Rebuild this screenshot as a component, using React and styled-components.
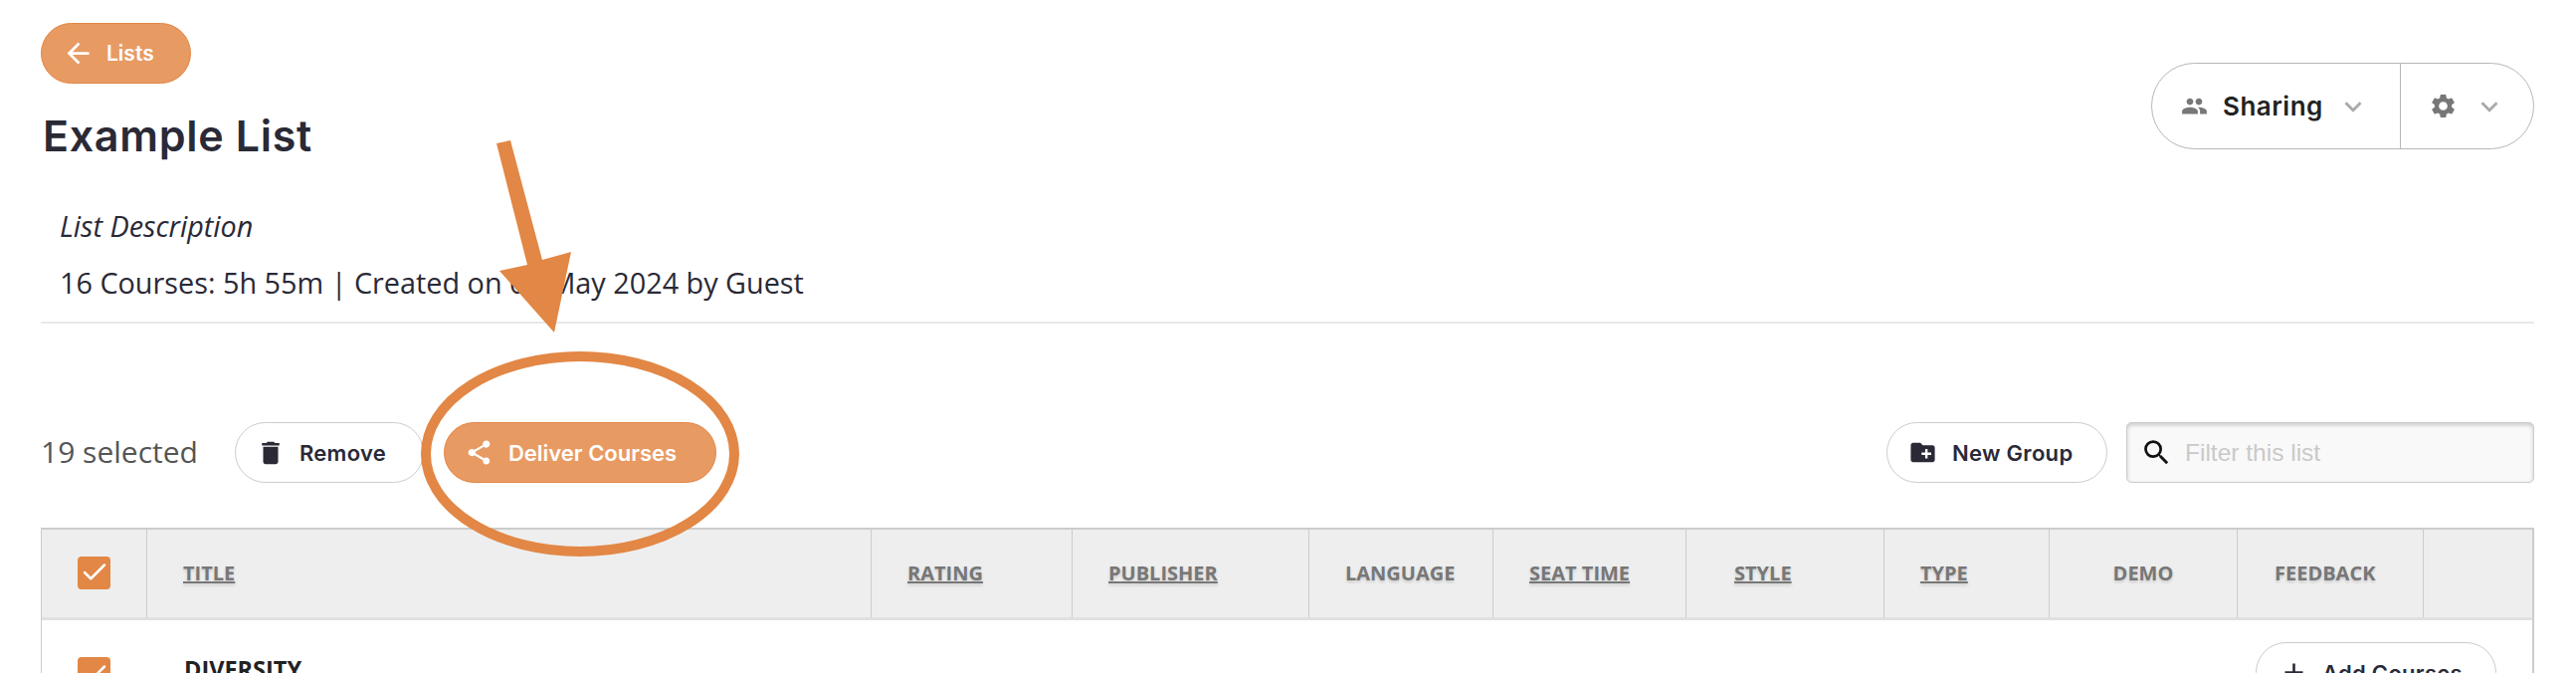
import React from "react";
import styled, { createGlobalStyle } from "styled-components";
import { MdPeople, MdSettings, MdDelete, MdShare, MdCreateNewFolder, MdSearch, MdArrowBack, MdAdd, MdKeyboardArrowDown } from "react-icons/md";
import { Check as CheckIcon } from "lucide-react";

const Global = createGlobalStyle`
  html, body { margin: 0; padding: 0; background: #fff; }
  * { box-sizing: border-box; }
`;
const ORANGE = "#e28745";
const Page = styled.div`
  position: relative; width: 2589px; height: 676px; overflow: hidden;
  padding: 23px 42px 0 41px; font-family: "Open Sans", sans-serif; color: #2a2936; background: #fff;
`;
const Header = styled.header`display: flex; justify-content: space-between; align-items: flex-start; height: 175px;`;
const TitleCol = styled.div`display: flex; flex-direction: column; align-items: flex-start;`;
const PillBase = styled.button`
  display: inline-flex; align-items: center; flex-shrink: 0; height: 61px; border-radius: 31px; padding: 0;
  font-family: Inter, sans-serif; font-weight: 600; font-size: 22px; letter-spacing: 0.3px; cursor: pointer;
`;
const Back = styled(PillBase)`
  width: 151px; padding-left: 20px; gap: 12px; font-size: 21px; letter-spacing: 0; background: #e89a63; border: 1px solid ${ORANGE}; color: #fff;
`;
const Title = styled.h1`
  margin: 27px 0 0 2px; font: 600 43px/50px Inter, sans-serif; letter-spacing: 0.7px; color: #2a2936;
`;
const Split = styled.div`
  display: flex; margin-top: 40px; height: 87px; width: 385px; border: 1px solid #b7b7b7; border-radius: 44px;
`;
const SplitPart = styled.div`
  display: flex; align-items: center; width: ${p => p.$w}px; padding-left: ${p => p.$pad}px;
  & + & { border-left: 1px solid #b7b7b7; }
`;
const SplitLabel = styled.span`font: 600 26px Inter, sans-serif; letter-spacing: 0.5px; color: #222; margin: 0 13px 0 15px;`;
const Chevron = styled(MdKeyboardArrowDown)`color: #aaa; flex-shrink: 0; margin-left: ${p => p.$ml || 0}px;`;
const Description = styled.section`
  padding: 0 0 11px 19px; border-bottom: 2px solid #e9e9e9; font-size: 28.8px; line-height: 57px; color: #2a2936;
`;
const Italic = styled.div`font-style: italic;`;
const Toolbar = styled.div`display: flex; align-items: center; height: 61px; margin-top: 99px;`;
const Count = styled.span`font-size: 30px; color: #555; margin: -2px 37px 0 0;`;
const Plain = styled(PillBase)`
  width: ${p => p.$w}px; padding-left: ${p => p.$pad}px; gap: ${p => p.$gap}px;
  background: #fff; border: 1px solid #ccc; color: #2a2936;
`;
const Deliver = styled(PillBase)`
  width: 274px; margin-left: 20px; padding-left: 20px; gap: 15px; letter-spacing: 0; background: #e89a63; border: 1px solid ${ORANGE}; color: #fff;
`;
const Spacer = styled.div`flex: 1;`;
const Search = styled.label`
  display: flex; align-items: center; gap: 12px; width: 410px; height: 61px; margin-left: 19px; padding-left: 13px;
  background: #f9f9f9; border: 1px solid #ccc; border-radius: 5px; box-shadow: inset 0 2px 4px rgba(0,0,0,.2);
  color: #111;
`;
const SearchInput = styled.input`
  flex: 1; min-width: 0; border: 0; outline: 0; padding: 0; background: transparent; font: 24.5px "Liberation Sans", sans-serif;
  &::placeholder { color: #c9c9c9; opacity: 1; }
`;
const Table = styled.div`margin-top: 45px; border-right: 2px solid #ccc; border-left: 1px solid #ccc;`;
const HeadRow = styled.div`
  display: grid; height: 93px; background: #eee; border-top: 2px solid #ccc; border-bottom: 3px solid #e0e0e0;
  grid-template-columns: 105px 728px 202px 238px 185px 194px 199px 166px 189px 187px 1fr;
`;
const HeadCell = styled.div`
  display: flex; align-items: center; justify-content: ${p => p.$center ? "center" : "flex-start"};
  padding: 0 0 2px ${p => p.$center ? 0 : (p.$pad || 36)}px; border-left: ${p => p.$first ? 0 : "1px solid #ccc"};
  font-weight: 700; font-size: 20px; color: #777; text-shadow: 0 2px 3px rgba(0,0,0,.15);
  text-decoration: ${p => p.$sort ? "underline" : "none"};
`;
const Check = styled.span`
  display: inline-flex; align-items: center; justify-content: center; flex-shrink: 0; width: 33px; height: 33px;
  border-radius: 4px; background: ${ORANGE}; color: #fff;
`;
const BodyRow = styled.div`
  display: flex; align-items: flex-start; height: 53px; padding: 37px 36px 0 36px;
`;
const GroupName = styled.div`
  margin: -4px 0 0 74px; font-weight: 700; font-size: 23.5px; line-height: 33px; color: #222; flex: 1;
`;
const AddButton = styled(Plain)`margin-top: -15px;`;
const Overlay = styled.svg`position: absolute; left: 0; top: 0; pointer-events: none;`;

const headers = [
  { t: "TITLE", sort: true }, { t: "RATING", sort: true }, { t: "PUBLISHER", sort: true }, { t: "LANGUAGE" },
  { t: "SEAT TIME", sort: true }, { t: "STYLE", sort: true, pad: 48 }, { t: "TYPE", sort: true },
  { t: "DEMO", center: true }, { t: "FEEDBACK", pad: 37 }, { t: "" },
];

const Tick = () => <CheckIcon size={30} strokeWidth={2} />;

export default function App() {
  return (
    <Page>
      <Global />
      <Header>
        <TitleCol>
          <Back><MdArrowBack size={33} />Lists</Back>
          <Title>Example List</Title>
        </TitleCol>
        <Split>
          <SplitPart $w={249} $pad={29}>
            <MdPeople size={27} color="#777" />
            <SplitLabel>Sharing</SplitLabel>
            <Chevron size={34} />
          </SplitPart>
          <SplitPart $w={134} $pad={28}>
            <MdSettings size={29} color="#777" />
            <Chevron size={34} $ml={15} />
          </SplitPart>
        </Split>
      </Header>
      <Description>
        <Italic>List Description</Italic>
        <div>16 Courses: 5h 55m | Created on 08 May 2024 by Guest</div>
      </Description>
      <Toolbar>
        <Count>19 selected</Count>
        <Plain $w={190} $pad={20} $gap={14}><MdDelete size={30} />Remove</Plain>
        <Deliver><MdShare size={29} />Deliver Courses</Deliver>
        <Spacer />
        <Plain $w={222} $pad={21} $gap={15}><MdCreateNewFolder size={29} />New Group</Plain>
        <Search><MdSearch size={33} /><SearchInput placeholder="Filter this list" /></Search>
      </Toolbar>
      <Table>
        <HeadRow>
          <HeadCell $first $center><Check><Tick /></Check></HeadCell>
          {headers.map((h, i) => <HeadCell key={i} $sort={h.sort} $center={h.center} $pad={h.pad}>{h.t}</HeadCell>)}
        </HeadRow>
        <BodyRow>
          <Check><Tick /></Check>
          <GroupName>DIVERSITY</GroupName>
          <AddButton $w={242} $pad={22} $gap={13}><MdAdd size={31} />Add Courses</AddButton>
        </BodyRow>
      </Table>
      <Overlay width="2589" height="676" viewBox="0 0 2589 676">
        <polygon points="499,144 513,141 545,261 574,253 557,334 502,272 530,266" fill={ORANGE} />
        <ellipse cx="583" cy="456" rx="155" ry="98" fill="none" stroke={ORANGE} strokeWidth="10" />
      </Overlay>
    </Page>
  );
}
